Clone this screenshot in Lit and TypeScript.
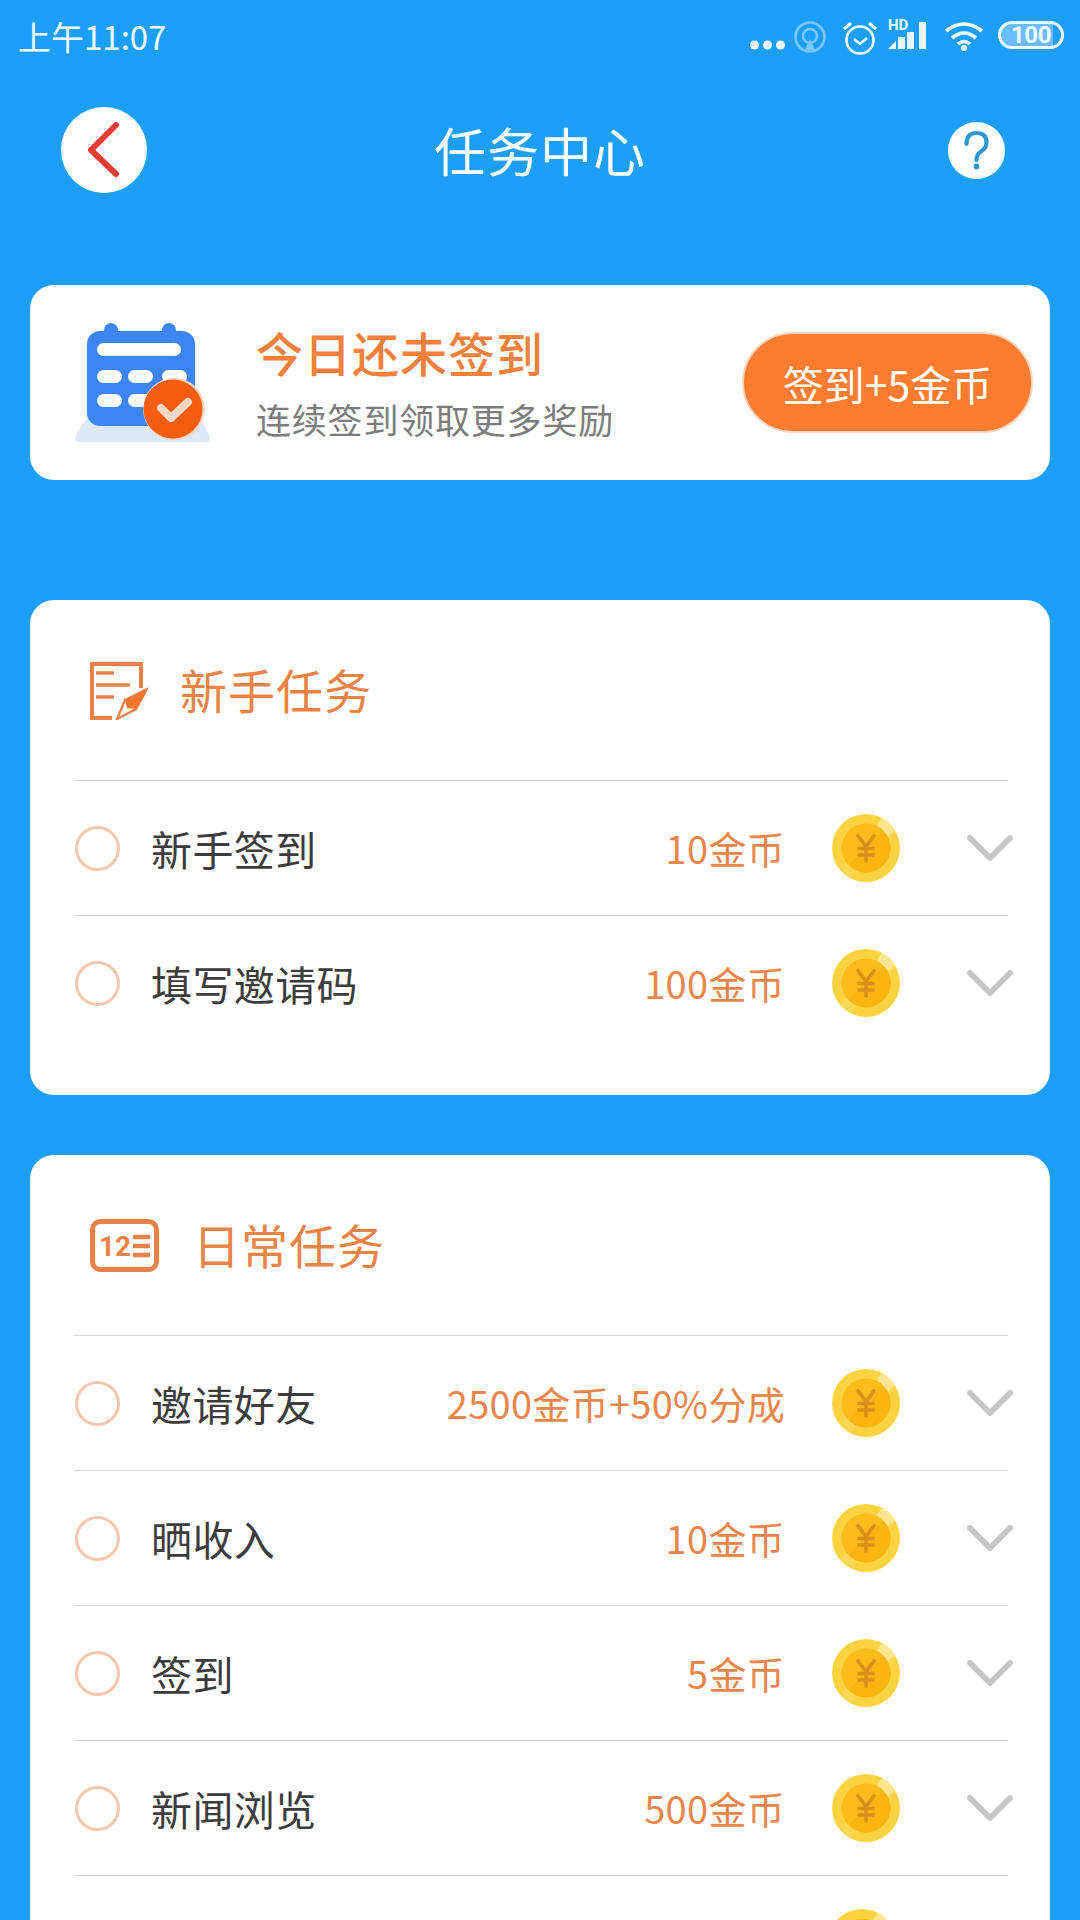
import { LitElement, html, css } from "lit";
import { customElement } from "lit/decorators.js";

const coin = html`<svg class="coin" viewBox="0 0 68 68" aria-hidden="true">
  <circle cx="34" cy="34" r="34" fill="#fbd341"/>
  <path d="M50 4A34 34 0 0 1 64 18L18 64A34 34 0 0 1 8 56Z" fill="#fcdc6c" opacity=".5"/>
  <path d="M50 4A34 34 0 0 1 63 16L56 22L45 11Z" fill="#fde68f"/>
  <circle cx="34" cy="34" r="24.5" fill="#fdbb1c"/>
  <path d="M58.500 34A24.500 24.500 0 0 1 16.500 51L51 16.500A24.500 24.500 0 0 1 58.500 34Z" fill="#fbb512"/>
  <path d="M25 20.500L34 32.500L43 20.500M34 32.500V48.500M25.500 34.500H42.500M25.500 41H42.500" fill="none" stroke="#d8901a" stroke-width="3.6"/>
</svg>`;

const chevron = html`<svg class="chev" viewBox="0 0 46 26" aria-hidden="true">
  <path d="M3 3L23 23L43 3" fill="none" stroke="#c6c6c6" stroke-width="6" stroke-linecap="round" stroke-linejoin="round"/>
</svg>`;

const calendar = html`<svg class="cal" viewBox="0 0 135 119" aria-hidden="true">
  <path d="M0 116Q0 113 2 110L12 94H125L133 110Q135 113 135 116Q135 119 130 119H5Q0 119 0 116Z" fill="#dde8f8"/>
  <rect x="12" y="8" width="108" height="95" rx="13" fill="#3c85f2"/>
  <rect x="29" y="0" width="14" height="20" rx="7" fill="#3c85f2"/>
  <rect x="87" y="0" width="14" height="20" rx="7" fill="#3c85f2"/>
  <rect x="22" y="20" width="84" height="13" rx="6.500" fill="#fff"/>
  <rect x="22" y="47" width="25" height="13" rx="6.500" fill="#fff"/>
  <rect x="53" y="47" width="25" height="13" rx="6.500" fill="#fff"/>
  <rect x="87" y="47" width="25" height="13" rx="6.500" fill="#fff"/>
  <rect x="22" y="71" width="25" height="13" rx="6.500" fill="#fff"/>
  <rect x="53" y="71" width="25" height="13" rx="6.500" fill="#fff"/>
  <circle cx="99" cy="86" r="31" fill="#fbd7c2"/>
  <circle cx="98" cy="86" r="29.500" fill="#f45d12"/>
  <path d="M86 85L96 95L113 79" fill="none" stroke="#fcd9c6" stroke-width="8" stroke-linecap="round" stroke-linejoin="round"/>
</svg>`;

const noteIcon = html`<svg class="ic-note" viewBox="0 0 58 58" aria-hidden="true">
  <path d="M22 56H2V2H51V26" fill="none" stroke="#e9824a" stroke-width="4"/>
  <path d="M6 11H24M6 23H40M6 35H24" fill="none" stroke="#e9824a" stroke-width="3.400"/>
  <path d="M27 57L35 38L57 27L46 47Z" fill="none" stroke="#e9824a" stroke-width="2.400"/>
  <path d="M37 46L35 38L57 27L46 47Z" fill="#f4752f"/>
</svg>`;

const dailyIcon = html`<svg class="ic-day" viewBox="0 0 69 53" aria-hidden="true">
  <rect x="2.500" y="2.500" width="64" height="48" rx="8" fill="none" stroke="#e9824a" stroke-width="5"/>
  <text x="9" y="37" font-size="28" font-weight="700" fill="#e9824a" font-family="Roboto, sans-serif">12</text>
  <path d="M43 18H60M43 27H60M43 36H60" stroke="#e9824a" stroke-width="4.500"/>
</svg>`;

type Task = { name: string; reward: string };

const starter: Task[] = [
  { name: "新手签到", reward: "10金币" },
  { name: "填写邀请码", reward: "100金币" },
];
const daily: Task[] = [
  { name: "邀请好友", reward: "2500金币+50%分成" },
  { name: "晒收入", reward: "10金币" },
  { name: "签到", reward: "5金币" },
  { name: "新闻浏览", reward: "500金币" },
];

@customElement("app-root")
export class AppRoot extends LitElement {
  static styles = css`
    :host {
      display: block;
      width: 1080px;
      height: 1920px;
      overflow: hidden;
      background: #1c9ffa;
      font-family: "Noto Sans CJK SC", "Noto Sans", sans-serif;
    }
    .status {
      height: 75px;
      display: flex;
      align-items: center;
      padding: 0 16px 0 18px;
      color: #fff;
    }
    .time { font-size: 33px; line-height: 1; margin-top: -2px; color: #f2faff; }
    .sys { margin-left: auto; display: flex; align-items: center; }
    .dots { width: 35px; height: 10px; margin-top: 14px; display: block; }
    .hot { width: 34px; height: 34px; margin-left: 8px; margin-top: -1px; display: block; }
    .alarm { width: 36px; height: 36px; margin-left: 15px; margin-top: 0; display: block; }
    .sig { width: 42px; height: 32px; margin-left: 10px; margin-top: -4px; position: relative; }
    .sig svg { position: absolute; inset: 0; width: 42px; height: 32px; }
    .hd { position: absolute; left: 0; top: -3px; font: 700 15px/16px Roboto, sans-serif; color: #eaf7ff; }
    .wifi { width: 42px; height: 32px; margin-left: 13px; margin-top: -4px; display: block; }
    .batt {
      width: 66px;
      height: 28px;
      margin-left: 13px;
      margin-top: -5px;
      box-sizing: border-box;
      border: 3px solid #f0faff;
      border-radius: 14px;
      position: relative;
      overflow: hidden;
      display: flex;
      align-items: center;
      justify-content: center;
      background: linear-gradient(90deg, #6bbcff 0 86%, transparent 86%);
      font: 700 24px/22px Roboto, sans-serif;
      color: #eef9ff;
      letter-spacing: -0.5px;
    }
    .nav {
      height: 150px;
      display: grid;
      grid-template-columns: 1fr auto 1fr;
      align-items: center;
      padding: 0 75px 0 61px;
    }
    .back {
      width: 86px;
      height: 86px;
      border-radius: 50%;
      background: #fff;
      display: flex;
      align-items: center;
      justify-content: center;
    }
    .back svg { width: 34px; height: 58px; }
    .title { font-size: 52px; line-height: 60px; color: #fff; letter-spacing: 1px; margin-left: 14px; }
    .help {
      justify-self: end;
      width: 57px;
      height: 57px;
      border-radius: 50%;
      background: #fff;
      display: block;
    }
    .card {
      margin: 0 30px;
      background: #fff;
      border-radius: 24px;
    }
    .sign {
      margin-top: 60px;
      height: 195px;
      display: flex;
      align-items: center;
      padding: 0 17px 0 45px;
      box-sizing: border-box;
    }
    .cal { width: 135px; height: 119px; display: block; margin-top: 0; }
    .sign-text { margin-left: 46px; margin-top: 0; }
    .sign-h { font-size: 47px; font-weight: 500; line-height: 60px; color: #f0803c; letter-spacing: 1px; }
    .sign-s { font-size: 35px; line-height: 50px; color: #7c7c7c; letter-spacing: 0.8px; margin-top: 12px; }
    .btn {
      margin-left: auto;
      width: 291px;
      height: 101px;
      box-sizing: border-box;
      border: 2px solid #f6d5bd;
      border-radius: 51px;
      background: #fd7c30;
      color: #fff;
      font-size: 41px;
      display: flex;
      align-items: center;
      justify-content: center;
      white-space: nowrap;
    }
    .tasks { margin-top: 120px; padding-bottom: 45px; }
    .tasks + .tasks { margin-top: 60px; }
    .head { height: 180px; display: flex; align-items: center; padding-left: 60px; }
    .ic-note { width: 58px; height: 58px; display: block; margin-top: 1px; }
    .ic-day { width: 69px; height: 53px; display: block; }
    .head h2 {
      margin: -2px 0 0;
      font-size: 47px;
      font-weight: 400;
      line-height: 60px;
      color: #ea8446;
      letter-spacing: 1px;
    }
    .ic-note + h2 { margin-left: 32px; }
    .ic-day + h2 { margin-left: 34px; }
    .row {
      height: 135px;
      margin: 0 42px 0 44px;
      box-sizing: border-box;
      border-top: 1.5px solid #d6d6d6;
      display: flex;
      align-items: center;
    }
    .radio {
      width: 45px;
      height: 45px;
      margin-left: 1px;
      box-sizing: border-box;
      border: 3px solid #f6c7ad;
      border-radius: 50%;
      flex: none;
    }
    .name { margin-left: 31px; font-size: 41px; line-height: 56px; color: #3c3c3c; letter-spacing: 0.4px; }
    .reward { margin-left: auto; font-size: 38px; line-height: 50px; color: #e9864c; letter-spacing: 0.3px; }
    .coin { width: 68px; height: 68px; display: block; flex: none; margin-left: 47px; }
    .chev { width: 46px; height: 26px; display: block; flex: none; margin: 0 -5px 0 67px; }
    .last { justify-content: flex-end; padding-right: 112px; }
    .last .coin { margin-left: 0; }
  `;

  private taskRow(t: Task) {
    return html`<div class="row">
      <span class="radio"></span>
      <span class="name">${t.name}</span>
      <span class="reward">${t.reward}</span>
      ${coin}${chevron}
    </div>`;
  }

  render() {
    return html`
      <div class="status">
        <span class="time">上午11:07</span>
        <div class="sys">
          <svg class="dots" viewBox="0 0 35 10" aria-hidden="true">
            <circle cx="4.500" cy="5" r="4.500" fill="#f2faff"/><circle cx="17.500" cy="5" r="4.500" fill="#f2faff"/><circle cx="30.500" cy="5" r="4.500" fill="#f2faff"/>
          </svg>
          <svg class="hot" viewBox="0 0 34 34" aria-hidden="true">
            <circle cx="17" cy="17" r="14.500" fill="none" stroke="#7cc6f8" stroke-width="2.500"/>
            <circle cx="17" cy="16" r="7" fill="none" stroke="#7cc6f8" stroke-width="2.500"/>
            <path d="M17 19L22 30H12Z" fill="#7cc6f8"/>
          </svg>
          <svg class="alarm" viewBox="0 0 36 36" aria-hidden="true">
            <circle cx="18" cy="20" r="13.500" fill="none" stroke="#eef9ff" stroke-width="2.600"/>
            <path d="M12 19L18 24L25 18" fill="none" stroke="#eef9ff" stroke-width="2.400"/>
            <path d="M2 9L9 3M34 9L27 3" fill="none" stroke="#eef9ff" stroke-width="3"/>
          </svg>
          <div class="sig">
            <svg viewBox="0 0 42 32" aria-hidden="true">
              <path d="M0 29L8 21V29ZM10 17H17V29H10ZM19 12H26V29H19ZM31 2H38V29H31Z" fill="#eaf7ff"/>
            </svg>
            <span class="hd">HD</span>
          </div>
          <svg class="wifi" viewBox="0 0 42 32" aria-hidden="true">
            <path d="M3 11Q21 -3 39 11M9 18Q21 8 33 18M15 24Q21 19 27 24" fill="none" stroke="#f0faff" stroke-width="3.600"/>
            <circle cx="21" cy="28" r="3" fill="#f0faff"/>
          </svg>
          <div class="batt">100</div>
        </div>
      </div>

      <div class="nav">
        <div class="back">
          <svg viewBox="0 0 34 58" aria-hidden="true">
            <path d="M29 4L4 29L29 53" fill="none" stroke="#e53c33" stroke-width="6" stroke-linecap="round" stroke-linejoin="round"/>
          </svg>
        </div>
        <div class="title">任务中心</div>
        <svg class="help" viewBox="0 0 57 57" role="img" aria-label="帮助">
          <path d="M18.500 22Q18.500 11 28.500 11Q38.500 11 38.500 20.500Q38.500 26 33 29.500Q28.500 32.500 28.500 38" fill="none" stroke="#2e97cf" stroke-width="4.200" stroke-linecap="round"/>
          <circle cx="28.500" cy="44.500" r="2.900" fill="#2e97cf"/>
        </svg>
      </div>

      <div class="card sign">
        ${calendar}
        <div class="sign-text">
          <div class="sign-h">今日还未签到</div>
          <div class="sign-s">连续签到领取更多奖励</div>
        </div>
        <div class="btn">签到+5金币</div>
      </div>

      <section class="card tasks">
        <div class="head">${noteIcon}<h2>新手任务</h2></div>
        ${starter.map((t) => this.taskRow(t))}
      </section>

      <section class="card tasks">
        <div class="head">${dailyIcon}<h2>日常任务</h2></div>
        ${daily.map((t) => this.taskRow(t))}
        <div class="row last">${coin}</div>
      </section>
    `;
  }
}
